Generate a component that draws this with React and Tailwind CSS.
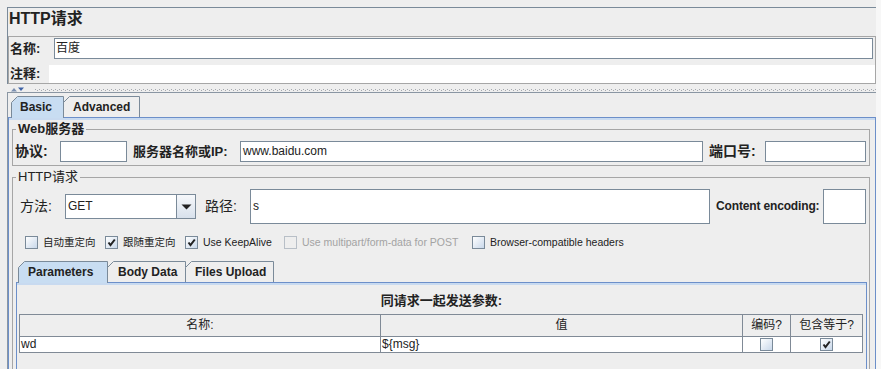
import React from "react";

const F = "font-['Liberation_Sans','Noto_Sans_CJK_SC',sans-serif]";

function Tab({ label, w, selected, cls, pl }) {
  const h = selected ? 22 : 21;
  const d = `M0.5,${h} V6.5 L6.5,0.5 H${w - 0.5} V${h}`;
  return (
    <div className={`relative shrink-0 h-[21px] ${cls}`}>
      <svg className="absolute left-0 top-0" width={w} height={h}>
        <path d={d + " Z"} fill={selected ? "#c8ddf2" : "#eeeeee"} stroke="none" />
        <path d={d} fill="none" stroke="#7a8a99" />
      </svg>
      <div className={`relative h-[21px] flex items-center text-[12px] font-bold text-[#222] ${pl}`}>
        {label}
      </div>
    </div>
  );
}

function Check({ checked, disabled }) {
  return (
    <div
      className={`shrink-0 w-[13px] h-[13px] border flex items-center justify-center ${
        disabled
          ? "border-[#b8bfc7] bg-[#eeeeee]"
          : "border-[#7a8a99] bg-linear-to-br from-white to-[#c9d8ea]"
      }`}
    >
      {checked && (
        <svg width="9" height="9" viewBox="0 0 9 9">
          <path d="M1.5 4.5 L3.5 7.2 L7.8 1.5" stroke="#222" strokeWidth="2" fill="none" />
        </svg>
      )}
    </div>
  );
}

function CheckItem({ checked, disabled, label, cls }) {
  return (
    <div className={`flex items-center shrink-0 ${cls}`}>
      <Check checked={checked} disabled={disabled} />
      <span
        className={`ml-[5px] text-[10.5px] leading-[13px] whitespace-nowrap ${
          disabled ? "text-[#a3a3a3]" : "text-[#222]"
        }`}
      >
        {label}
      </span>
    </div>
  );
}

export default function App() {
  return (
    <div className={`w-[881px] h-[369px] overflow-hidden bg-[#eeeeee] flex text-[#222] ${F}`}>
      <div className="w-[876px] shrink-0 pl-[7px] pt-[7px] flex flex-col">
        {/* Top section */}
        <div className="w-[869px] border-t border-l border-[#7a8a99]">
          <div className="h-[28px] pt-[2px] pl-[1px] text-[16px] leading-[18px] font-bold text-[#222]">
            HTTP请求
          </div>
          <div className="border border-[#a6a6a6] flex flex-col">
            <div className="flex items-center pt-[1px] h-[22px]">
              <div className="w-[45px] pl-[1px] text-[13px] font-bold leading-[21px]">名称:</div>
              <div className="w-[819px] h-[21px] border border-[#7a8a99] bg-white text-[12px] leading-[19px] pl-[1px]">
                百度
              </div>
            </div>
            <div className="flex items-center mt-[6px] h-[18px]">
              <div className="w-[40px] pl-[1px] text-[13px] font-bold leading-[18px]">注释:</div>
              <div className="w-[826px] h-[18px] bg-white"></div>
            </div>
          </div>
        </div>

        {/* Splitter */}
        <div className="h-[9px] w-[869px] flex items-start pt-[3px]">
          <svg width="20" height="5" className="ml-[4px] shrink-0">
            <path d="M0 4.5 L3 1 L6 4.5Z" fill="#7b8fb0" />
            <path d="M7 0.5 L13 0.5 L10 4Z" fill="#3f63a6" />
          </svg>
          <div className="flex-1 ml-[4px] mt-[2px] flex flex-col">
            <div className="h-[1px] bg-[repeating-linear-gradient(90deg,#a4a8ae_0_1px,transparent_1px_4px)]" />
            <div className="h-[1px] bg-[repeating-linear-gradient(90deg,transparent_0_2px,#a4a8ae_2px_3px,transparent_3px_4px)]" />
          </div>
        </div>

        {/* Tabbed section */}
        <div className="w-[869px] flex-1 border-t border-l border-[#8a96a3] flex flex-col">
          <div className="flex pt-[3px] pl-[3px]">
            <Tab label="Basic" w={53} selected cls="w-[53px] z-10" pl="pl-[9px]" />
            <Tab label="Advanced" w={77} cls="w-[77px] -ml-[1px]" pl="pl-[10px]" />
          </div>
          <div className="w-[868px] flex-1 border-t border-x border-[#6c8fc9] flex flex-col">
            <div className="h-[2px] bg-[#c8daf0]" />
            <div className="pl-[3px] pt-[2px] flex flex-col">
              {/* Web server */}
              <fieldset className="w-[858px] border border-[#a6a6a6] pb-[3px]">
                <legend className="ml-[3px] px-[2px] text-[13px] font-bold leading-[14px]">Web服务器</legend>
                <div className="flex items-center pt-[5px] pl-[2px]">
                  <div className="w-[45px] text-[14px] font-bold leading-[21px]">协议:</div>
                  <div className="w-[67px] h-[21px] border border-[#7a8a99] bg-white" />
                  <div className="ml-[6px] w-[107px] text-[13px] font-bold leading-[21px] whitespace-nowrap">
                    服务器名称或IP:
                  </div>
                  <div className="w-[463px] h-[21px] border border-[#7a8a99] bg-white text-[12px] leading-[19px] pl-[2px]">
                    www.baidu.com
                  </div>
                  <div className="ml-[6px] w-[56px] text-[14px] font-bold leading-[21px]">端口号:</div>
                  <div className="w-[101px] h-[21px] border border-[#7a8a99] bg-white" />
                </div>
              </fieldset>

              {/* HTTP request */}
              <fieldset className="mt-[4px] w-[858px] border border-[#a6a6a6] pb-[20px]">
                <legend className="ml-[3px] px-[2px] text-[13px] leading-[14px]">HTTP请求</legend>
                <div className="flex items-center pt-[5px] pl-[7px]">
                  <div className="w-[45px] text-[14px] leading-[21px]">方法:</div>
                  <div className="w-[131px] h-[25px] border border-[#7a8a99] bg-white flex">
                    <div className="flex-1 pl-[2px] text-[12px] leading-[23px]">GET</div>
                    <div className="w-[19px] h-[23px] border-l border-[#7a8a99] bg-linear-to-b from-[#f6f8fb] to-[#d8e1ec] flex items-center justify-center">
                      <svg width="11" height="6" viewBox="0 0 11 6">
                        <path d="M0.5 0.5 L10.5 0.5 L5.5 5.5Z" fill="#222" />
                      </svg>
                    </div>
                  </div>
                  <div className="ml-[9px] w-[45px] text-[14px] leading-[21px]">路径:</div>
                  <div className="w-[460px] h-[35px] border border-[#7a8a99] bg-white text-[12px] leading-[33px] pl-[2px]">
                    s
                  </div>
                  <div className="ml-[6px] w-[107px] text-[12px] font-bold leading-[21px] whitespace-nowrap tracking-[-0.15px]">
                    Content encoding:
                  </div>
                  <div className="w-[43px] h-[35px] border border-[#7a8a99] bg-white" />
                </div>

                <div className="flex items-center mt-[12px] pl-[12px] h-[13px]">
                  <CheckItem label="自动重定向" cls="w-[80px]" />
                  <CheckItem label="跟随重定向" checked cls="w-[80px]" />
                  <CheckItem label="Use KeepAlive" checked cls="w-[99px]" />
                  <CheckItem label="Use multipart/form-data for POST" disabled cls="w-[188px]" />
                  <CheckItem label="Browser-compatible headers" />
                </div>

                <div className="flex mt-[12px] pl-[5px]">
                  <Tab label="Parameters" w={90} selected cls="w-[90px] z-10" pl="pl-[10px]" />
                  <Tab label="Body Data" w={79} cls="w-[79px] -ml-[1px]" pl="pl-[11px]" />
                  <Tab label="Files Upload" w={89} cls="w-[89px] -ml-[1px]" pl="pl-[10px]" />
                </div>
                <div className="ml-[3px] w-[851px] border-t border-x border-[#6c8fc9] flex flex-col pb-[30px]">
                  <div className="h-[2px] bg-[#c8daf0]" />
                  <div className="pt-[8px] h-[24px] text-center text-[13px] font-bold leading-[16px]">
                    同请求一起发送参数:
                  </div>
                  <div className="mt-[5px] ml-[2px] w-[844px] border-l border-[#808a96] flex flex-col">
                    <div className="flex h-[23px] border-y border-[#808a96] bg-[#eeeeee] text-[12px] leading-[21px] text-center">
                      <div className="w-[361px] border-r border-[#808a96]">名称:</div>
                      <div className="w-[362px] border-r border-[#808a96]">值</div>
                      <div className="w-[48px] border-r border-[#808a96]">编码?</div>
                      <div className="w-[72px] border-r border-[#808a96]">包含等于?</div>
                    </div>
                    <div className="flex h-[16px] border-b border-[#808a96] bg-white text-[12px] leading-[15px]">
                      <div className="w-[361px] border-r border-[#808a96] pl-[1px]">wd</div>
                      <div className="w-[362px] border-r border-[#808a96] pl-[1px]">{"${msg}"}</div>
                      <div className="w-[48px] border-r border-[#808a96] flex items-center justify-center">
                        <Check />
                      </div>
                      <div className="w-[72px] border-r border-[#808a96] flex items-center justify-center">
                        <Check checked />
                      </div>
                    </div>
                  </div>
                </div>
              </fieldset>
            </div>
          </div>
        </div>
      </div>
      <div className="w-[5px] shrink-0 bg-[#f7f7f7]" />
    </div>
  );
}
